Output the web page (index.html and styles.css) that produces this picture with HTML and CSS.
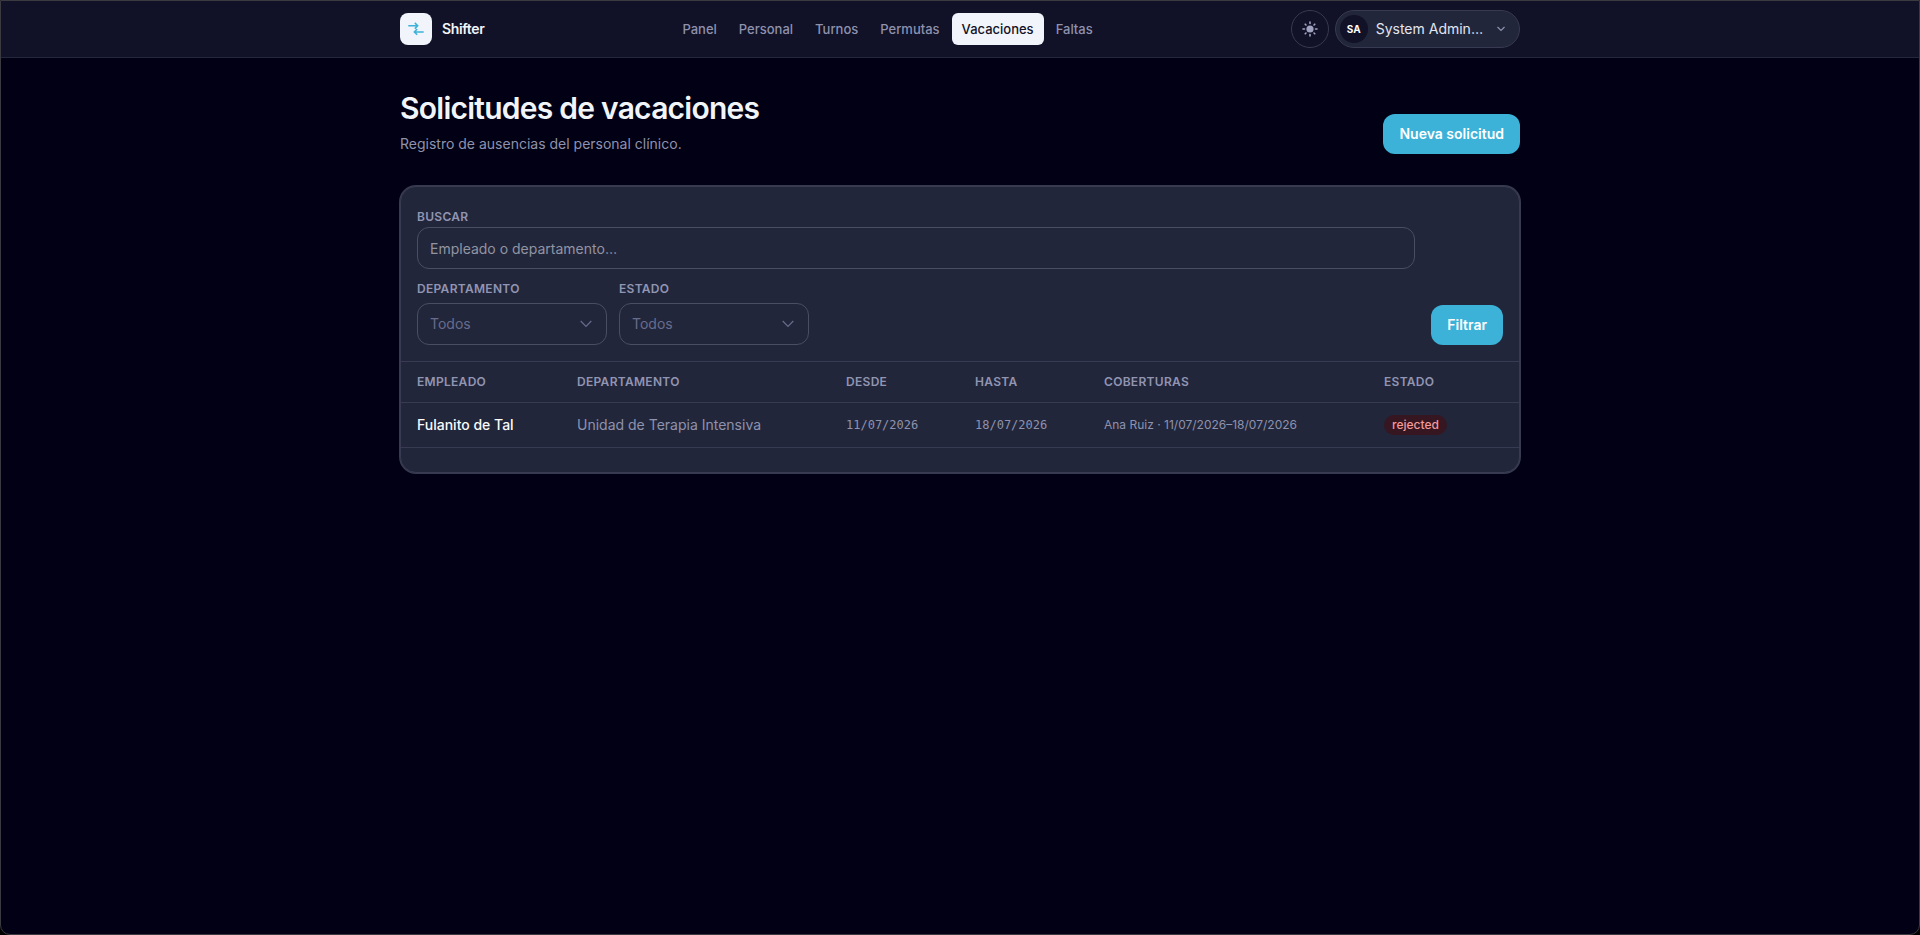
FILE: index.html
```
<!DOCTYPE html>
<html lang="es">
<head>
<meta charset="UTF-8">
<meta name="viewport" content="width=device-width, initial-scale=1">
<title>Shifter - Vacaciones</title>
<link rel="stylesheet" href="styles.css">
</head>
<body>
<div class="app">
  <header class="topbar">
    <div class="topbar-inner">
      <a class="brand" href="#">
        <span class="brand-logo">
          <svg width="16" height="16" viewBox="0 0 16 16" fill="none" stroke="currentColor" stroke-width="1.5" aria-hidden="true">
            <path d="M0.3 4.7H9.5M6.8 1.9L9.7 4.7L6.8 7.6"/>
            <path d="M15.7 10.9H6.5M9.2 8L6.3 10.9L9.2 13.8"/>
          </svg>
        </span>
        Shifter
      </a>

      <nav class="nav">
        <a href="#">Panel</a>
        <a href="#">Personal</a>
        <a href="#">Turnos</a>
        <a href="#">Permutas</a>
        <a href="#" class="active">Vacaciones</a>
        <a href="#">Faltas</a>
      </nav>

      <div class="actions">
        <button type="button" class="theme-btn" aria-label="Cambiar tema">
          <svg width="16" height="16" viewBox="0 0 16 16" aria-hidden="true">
            <circle cx="8" cy="8" r="3.6" fill="currentColor"/>
            <path d="M8 1v1.5M8 13.5V15M1 8h1.5M13.5 8H15M3.2 3.2l.8.8M12 12l.8.8M3.2 12.8l.8-.8M12 4l.8-.8" stroke="currentColor" stroke-width="1.6" stroke-linecap="round"/>
          </svg>
        </button>
        <button type="button" class="user-btn">
          <span class="avatar">SA</span>
          <span class="user-name">System Admin…</span>
          <svg width="8" height="8" viewBox="0 0 8 8" fill="none" stroke="currentColor" stroke-width="1.2" aria-hidden="true">
            <path d="M0.5 2L4 5.5L7.5 2"/>
          </svg>
        </button>
      </div>
    </div>
  </header>

  <main class="page">
    <div class="page-head">
      <div>
        <h1>Solicitudes de vacaciones</h1>
        <p>Registro de ausencias del personal clínico.</p>
      </div>
      <button type="button" class="btn">Nueva solicitud</button>
    </div>

    <section class="card">
      <form class="filters">
        <div class="fields">
          <div class="field field-search">
            <label for="buscar">Buscar</label>
            <input type="text" id="buscar" name="buscar" placeholder="Empleado o departamento…">
          </div>
          <div class="field">
            <label for="departamento">Departamento</label>
            <select id="departamento" name="departamento">
              <option>Todos</option>
            </select>
            <svg class="chevron" width="12" height="8" viewBox="0 0 12 8" fill="none" stroke="currentColor" stroke-width="1.2" aria-hidden="true"><path d="M0.7 1L6 6.5L11.3 1"/></svg>
          </div>
          <div class="field">
            <label for="estado">Estado</label>
            <select id="estado" name="estado">
              <option>Todos</option>
            </select>
            <svg class="chevron" width="12" height="8" viewBox="0 0 12 8" fill="none" stroke="currentColor" stroke-width="1.2" aria-hidden="true"><path d="M0.7 1L6 6.5L11.3 1"/></svg>
          </div>
        </div>
        <button type="submit" class="btn">Filtrar</button>
      </form>

      <table>
        <thead>
          <tr>
            <th class="col-empleado">Empleado</th>
            <th class="col-depto">Departamento</th>
            <th class="col-fecha">Desde</th>
            <th class="col-fecha">Hasta</th>
            <th class="col-cobertura">Coberturas</th>
            <th class="col-estado">Estado</th>
          </tr>
        </thead>
        <tbody>
          <tr>
            <td class="empleado">Fulanito de Tal</td>
            <td>Unidad de Terapia Intensiva</td>
            <td class="fecha">11/07/2026</td>
            <td class="fecha">18/07/2026</td>
            <td class="cobertura">Ana Ruiz · 11/07/2026–18/07/2026</td>
            <td><span class="badge">rejected</span></td>
          </tr>
        </tbody>
      </table>
    </section>
  </main>
</div>
</body>
</html>
```
FILE: styles.css
```
* {
  box-sizing: border-box;
}
body {
  margin: 0;
  background: #000;
  color: #f1f5f9;
  font-family: Inter, "Liberation Sans", sans-serif;
  font-size: 14px;
  line-height: 20px;
}
button,
input,
select {
  font: inherit;
}
a {
  color: inherit;
  text-decoration: none;
}
/* Window frame */
.app {
  min-height: 100vh;
  background: #020014;
  border: 1px solid #3a3a40;
  border-radius: 0 0 10px 10px;
}

/* Top bar */
.topbar {
  background: #111127;
  border-bottom: 1px solid #25273c;
}
.topbar-inner {
  display: flex;
  align-items: center;
  justify-content: space-between;
  max-width: 1120px;
  height: 56px;
  margin: 0 auto;
}
.brand {
  display: flex;
  align-items: center;
  gap: 10px;
  font-weight: 600;
  letter-spacing: -0.025em;
}
.brand-logo {
  display: flex;
  align-items: center;
  justify-content: center;
  width: 32px;
  height: 32px;
  border-radius: 8px;
  background: #f1f5fb;
  color: #3cb2d8;
}
.nav {
  display: flex;
  gap: 2px;
}
.nav a {
  padding: 6px 10px;
  border-radius: 6px;
  color: #8e92ad;
  font-size: 13px;
  font-weight: 500;
}
.nav .active {
  background: #f1f5fb;
  color: #111127;
}
.actions {
  display: flex;
  gap: 6px;
}
.theme-btn {
  display: flex;
  align-items: center;
  justify-content: center;
  width: 38px;
  height: 38px;
  padding: 0;
  border: 1px solid #373a50;
  border-radius: 50%;
  background: none;
  color: #a0a4c0;
}
.user-btn {
  display: flex;
  align-items: center;
  gap: 8px;
  height: 38px;
  padding: 0 14px 0 4px;
  border: 1px solid #373a50;
  border-radius: 19px;
  background: #22263b;
  color: #8e92ad;
}
.avatar {
  width: 28px;
  border-radius: 50%;
  background: #111127;
  color: #fff;
  font-size: 10px;
  font-weight: 700;
  line-height: 28px;
}
.user-name {
  margin-right: 6px;
  color: #e2e5f0;
}

/* Page */
.page {
  max-width: 1120px;
  margin: 0 auto;
  padding: 32px 0;
}
.page-head {
  display: flex;
  align-items: flex-end;
  justify-content: space-between;
  margin-bottom: 32px;
}
h1 {
  margin: 0;
  font-size: 30px;
  font-weight: 600;
  line-height: 36px;
  letter-spacing: -0.025em;
}
.page-head p {
  margin: 8px 0 0;
  color: #8e92ad;
}
.btn {
  height: 40px;
  padding: 0 16px;
  border: 0;
  border-radius: 12px;
  background: #3cb2d8;
  color: #fff;
  font-weight: 600;
}

/* Card */
.card {
  padding-bottom: 24px;
  border: 1px solid #373a50;
  border-radius: 16px;
  background: #22263b;
  box-shadow: 0 0 0 1px #373a50;
}
.filters {
  display: flex;
  align-items: flex-end;
  gap: 16px;
  padding: 22px 16px 16px;
}
.fields {
  display: flex;
  flex: 1;
  flex-wrap: wrap;
  gap: 12px;
}
.field {
  display: flex;
  flex-direction: column;
  gap: 6px;
  position: relative;
  width: 190px;
}
.field-search {
  gap: 2px;
  width: 100%;
}
.field label,
th {
  color: #9195b2;
  font-size: 12px;
  font-weight: 600;
  line-height: 16px;
  letter-spacing: 0.025em;
  text-transform: uppercase;
}
.field input,
.field select {
  width: 100%;
  height: 42px;
  padding: 0 12px;
  border: 1px solid #4b4e62;
  border-radius: 12px;
  background: transparent;
  color: #686c8c;
  appearance: none;
}
.field input::placeholder {
  color: #9294a2;
}
.chevron {
  position: absolute;
  right: 15px;
  bottom: 17px;
  color: #686c8c;
  pointer-events: none;
}

/* Table */
table {
  width: 100%;
  border-collapse: collapse;
  border-top: 1px solid #373a50;
}
th,
td {
  padding: 12px 16px;
  border-bottom: 1px solid #373a50;
  text-align: left;
}
td {
  color: #8e92ad;
}
.col-empleado { width: 160px; }
.col-depto { width: 269px; }
.col-fecha { width: 129px; }
.col-cobertura { width: 280px; }
.col-estado { width: 151px; }
.empleado {
  color: #f8fafc;
  font-weight: 500;
}
.fecha {
  font-family: "DejaVu Sans Mono", monospace;
  font-size: 12px;
}
.cobertura {
  font-size: 12px;
}
.badge {
  display: inline-block;
  padding: 2px 8px;
  border-radius: 10px;
  background: #351621;
  color: #f39a9c;
  font-size: 12px;
  font-weight: 500;
  line-height: 16px;
  vertical-align: top;
}
```
